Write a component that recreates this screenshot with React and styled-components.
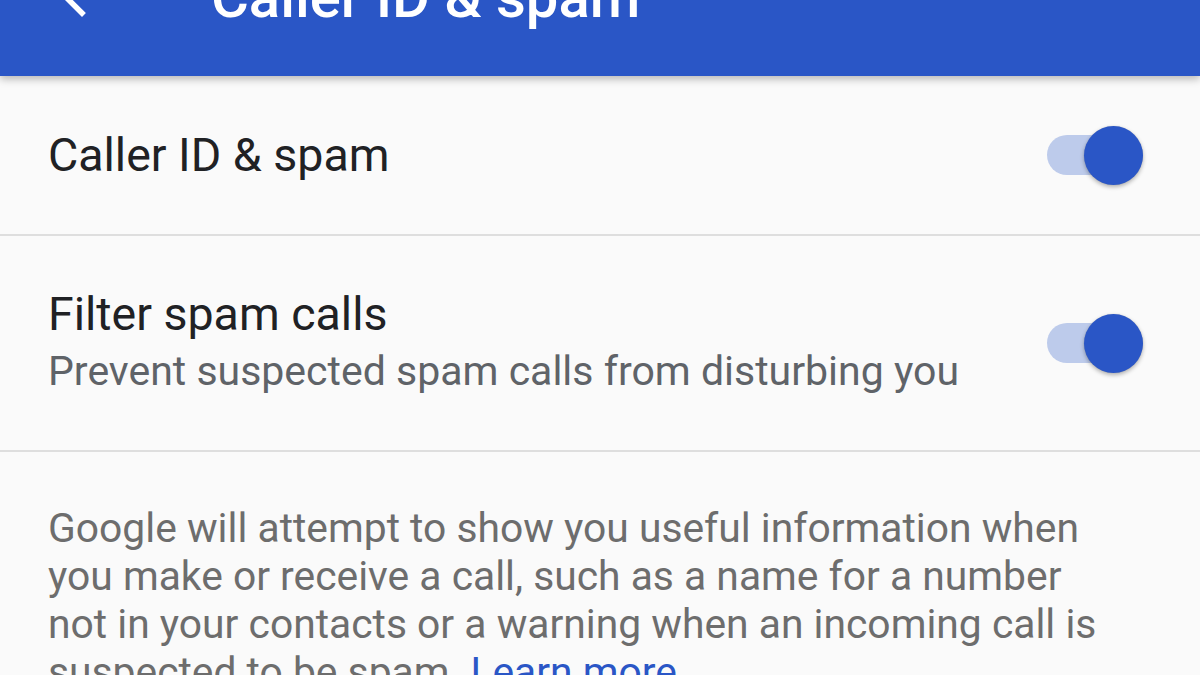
import React from "react";
import styled, { createGlobalStyle } from "styled-components";

const Global = createGlobalStyle`
  html, body { margin: 0; padding: 0; background: #fafafa; }
  body { font-family: Roboto, "Noto Sans", sans-serif; overflow: hidden; }
  * { box-sizing: border-box; }
`;

const Page = styled.div`
  width: 1200px;
  height: 675px;
  overflow: hidden;
  background: #fafafa;
  display: flex;
  flex-direction: column;
`;

const Toolbar = styled.header`
  position: relative;
  z-index: 2;
  height: 76px;
  flex: none;
  background: #2a56c6;
  box-shadow: 0 3px 8px rgba(0, 0, 0, 0.28);
`;

const ToolbarRow = styled.div`
  display: flex;
  align-items: center;
  height: 66px;
  margin-top: -38px;
  padding-left: 49px;
`;

const BackIcon = styled.svg`
  width: 66px;
  height: 66px;
  flex: none;
  fill: #fff;
`;

const ToolbarTitle = styled.h1`
  margin: 0 0 0 96px;
  font-size: 58px;
  font-weight: 500;
  line-height: 58px;
  color: #fff;
  white-space: nowrap;
  transform: translateY(2px);
`;

const Row = styled.div`
  flex: none;
  display: flex;
  align-items: center;
  justify-content: space-between;
  height: ${(p) => p.$h}px;
  padding: 0 57px 0 48px;
  border-bottom: 2px solid #dedede;
`;

const TextBlock = styled.div`
  display: flex;
  flex-direction: column;
`;

const Title = styled.div`
  font-size: 46.5px;
  line-height: 56px;
  color: #202124;
  white-space: nowrap;
`;

const Subtitle = styled.div`
  font-size: 41px;
  line-height: 58px;
  color: #5f6368;
  white-space: nowrap;
`;

const SwitchBox = styled.div`
  position: relative;
  width: 96px;
  height: 59px;
  flex: none;
  display: flex;
  align-items: center;
`;

const Track = styled.div`
  width: 96px;
  height: 40px;
  border-radius: 20px;
  background: #bdcbeb;
`;

const Thumb = styled.div`
  position: absolute;
  right: 0;
  top: 0;
  width: 59px;
  height: 59px;
  border-radius: 50%;
  background: #2a56c6;
  box-shadow: 0 2px 4px rgba(0, 0, 0, 0.3), 0 0 1px rgba(0, 0, 0, 0.15);
`;

const Paragraph = styled.p`
  margin: 0;
  padding: 52px 90px 0 48px;
  font-size: 40.8px;
  line-height: 48px;
  color: #6d6d6d;
`;

const Link = styled.a`
  color: #2a56c6;
  text-decoration: none;
`;

function Switch() {
  return (
    <SwitchBox>
      <Track />
      <Thumb />
    </SwitchBox>
  );
}

export default function App() {
  return (
    <>
      <Global />
      <Page>
        <Toolbar>
          <ToolbarRow>
            <BackIcon viewBox="0 0 24 24">
              <path d="M20 11H7.83l5.59-5.59L12 4l-8 8 8 8 1.41-1.41L7.83 13H20v-2z" />
            </BackIcon>
            <ToolbarTitle>Caller ID &amp; spam</ToolbarTitle>
          </ToolbarRow>
        </Toolbar>
        <Row $h={160}>
          <TextBlock>
            <Title>Caller ID &amp; spam</Title>
          </TextBlock>
          <Switch />
        </Row>
        <Row $h={216}>
          <TextBlock>
            <Title>Filter spam calls</Title>
            <Subtitle>Prevent suspected spam calls from disturbing you</Subtitle>
          </TextBlock>
          <Switch />
        </Row>
        <Paragraph>
          Google will attempt to show you useful information when you make or
          receive a call, such as a name for a number not in your contacts or a
          warning when an incoming call is suspected to be spam.{" "}
          <Link href="#">Learn more</Link>
        </Paragraph>
      </Page>
    </>
  );
}
